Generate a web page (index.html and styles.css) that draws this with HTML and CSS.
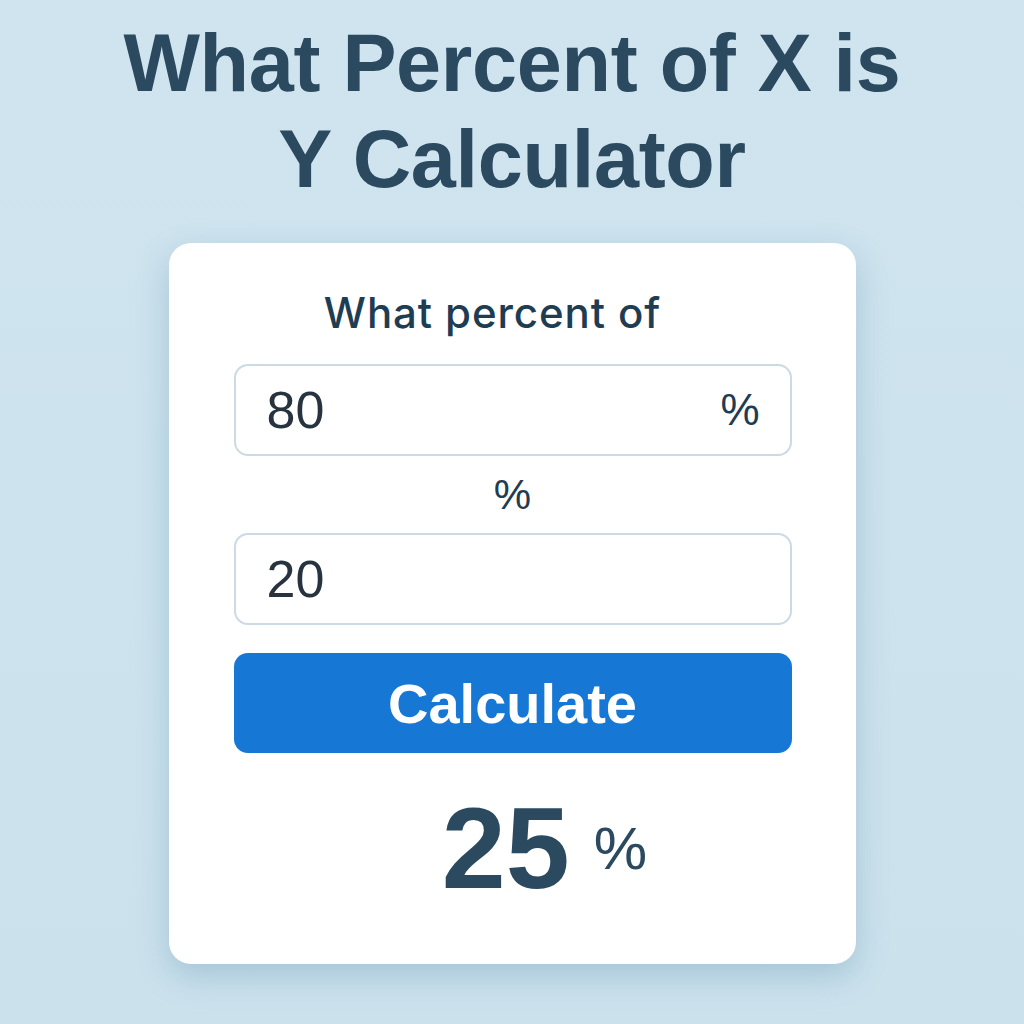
FILE: index.html
```html
<!DOCTYPE html>
<html lang="en">
<head>
<meta charset="utf-8">
<title>What Percent of X is Y Calculator</title>
<link rel="stylesheet" href="styles.css">
</head>
<body>
<main class="page">
  <h1 class="title">What Percent of X is<br>Y Calculator</h1>
  <section class="card">
    <div class="label">What percent of</div>
    <div class="field">
      <span class="value">80</span>
      <span class="unit">%</span>
    </div>
    <div class="sep">%</div>
    <div class="field">
      <span class="value">20</span>
    </div>
    <button class="btn" type="button">Calculate</button>
    <div class="result">
      <span class="result-num">25</span>
      <span class="result-unit">%</span>
    </div>
  </section>
</main>
</body>
</html>
```

FILE: styles.css
```css
html, body {
  margin: 0;
  padding: 0;
}
body {
  background: linear-gradient(180deg, #cfe4ef 0%, #cbe2ed 100%);
  height: 1024px;
  overflow: hidden;
  font-family: "Liberation Sans", Arial, sans-serif;
}
.page {
  display: flex;
  flex-direction: column;
  align-items: center;
}
.title {
  margin: 15px 0 0;
  font-family: "Liberation Sans", Arial, sans-serif;
  font-weight: 700;
  font-size: 81px;
  line-height: 96px;
  color: #2b4a5f;
  text-align: center;
  letter-spacing: -0.3px;
}
.card {
  margin-top: 36px;
  width: 687px;
  box-sizing: border-box;
  padding: 46px 64px 58px 65px;
  background: #ffffff;
  border-radius: 22px;
  box-shadow: 0 12px 32px rgba(70, 120, 150, 0.28);
  display: flex;
  flex-direction: column;
}
.label {
  font-family: Inter, "Noto Sans", sans-serif;
  font-weight: 500;
  font-size: 42px;
  line-height: 48px;
  letter-spacing: 0.9px;
  color: #1f3d52;
  text-align: center;
  padding-right: 40px;
  margin-bottom: 27px;
}
.field {
  height: 92px;
  box-sizing: border-box;
  border: 2px solid #cbdae5;
  border-radius: 14px;
  display: flex;
  align-items: center;
  justify-content: space-between;
  padding: 0 30px 0 31px;
}
.value {
  font-size: 52px;
  color: #27343f;
}
.unit {
  font-size: 44px;
  color: #1f3d52;
}
.sep {
  height: 77px;
  display: flex;
  align-items: center;
  justify-content: center;
  font-size: 42px;
  color: #1f3d52;
}
.btn {
  margin-top: 28px;
  height: 100px;
  border: none;
  border-radius: 14px;
  background: #1677d4;
  color: #ffffff;
  font-family: "Liberation Sans", Arial, sans-serif;
  font-weight: 700;
  font-size: 56px;
  padding: 0;
}
.result {
  margin-top: 38px;
  display: flex;
  align-items: center;
  justify-content: center;
  gap: 24px;
  padding-left: 64px;
  color: #2b4a5f;
}
.result-num {
  font-weight: 700;
  font-size: 115px;
  line-height: 115px;
}
.result-unit {
  font-size: 60px;
  line-height: 60px;
}
```
